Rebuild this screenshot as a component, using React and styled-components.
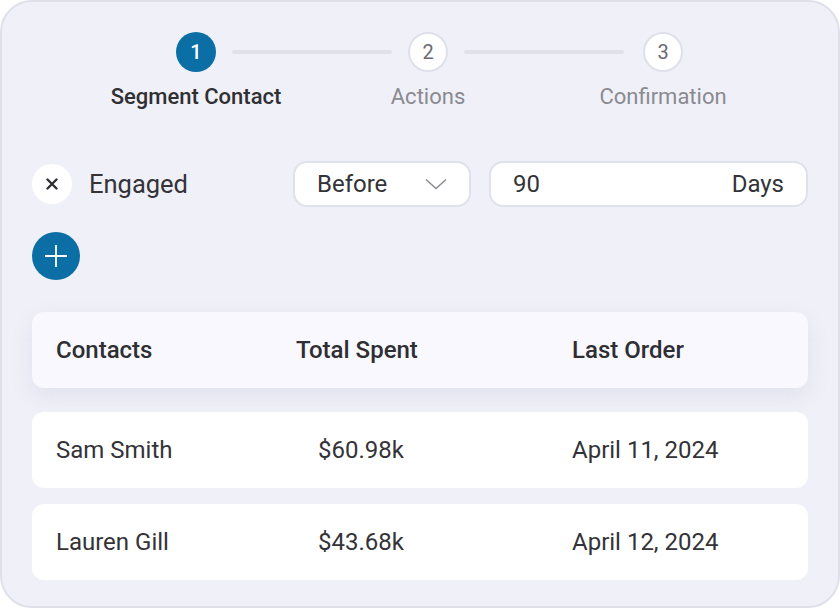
import React from 'react';
import styled, { createGlobalStyle } from 'styled-components';

const Global = createGlobalStyle`
  html, body {
    margin: 0;
    padding: 0;
    background: #ffffff;
  }
  body {
    font-family: Roboto, "Liberation Sans", sans-serif;
    color: #333338;
  }
`;

const Card = styled.div`
  box-sizing: border-box;
  width: 840px;
  height: 608px;
  background: #f0f0f8;
  border: 2px solid #dfe0ea;
  border-radius: 32px;
  padding: 30px 30px 0;
  display: flex;
  flex-direction: column;
`;

const Stepper = styled.div`
  display: flex;
  align-items: flex-start;
  padding-left: 144px;
`;

const Step = styled.div`
  width: 40px;
  display: flex;
  flex-direction: column;
  align-items: center;
`;

const Dot = styled.div`
  box-sizing: border-box;
  width: 40px;
  height: 40px;
  border-radius: 50%;
  display: flex;
  align-items: center;
  justify-content: center;
  font-size: 20px;
  font-weight: ${p => (p.active ? 500 : 400)};
  background: ${p => (p.active ? '#0b6fa6' : '#ffffff')};
  color: ${p => (p.active ? '#ffffff' : '#6a6a70')};
  border: ${p => (p.active ? 'none' : '2px solid #dfe0ea')};
`;

const StepLabel = styled.div`
  margin-top: 12px;
  white-space: nowrap;
  font-size: 22px;
  line-height: 26px;
  font-weight: ${p => (p.active ? 500 : 400)};
  color: ${p => (p.active ? '#303034' : '#8a8a90')};
`;

const Connector = styled.div`
  width: ${p => p.w}px;
  height: 4px;
  border-radius: 2px;
  background: #dfe0ea;
  margin: 18px 16px 0 16px;
  margin-right: ${p => p.mr || 16}px;
`;

const FilterRow = styled.div`
  display: flex;
  align-items: center;
  margin-top: 51px;
`;

const RoundButton = styled.button`
  box-sizing: border-box;
  flex: none;
  width: 40px;
  height: 40px;
  border-radius: 50%;
  border: none;
  padding: 0;
  background: #ffffff;
  display: flex;
  align-items: center;
  justify-content: center;
  margin-right: 17px;
`;

const FilterName = styled.div`
  flex: 1;
  font-size: 25.5px;
  color: #333338;
`;

const Field = styled.div`
  box-sizing: border-box;
  width: ${p => p.w}px;
  height: 46px;
  margin-right: ${p => p.mr || 0}px;
  background: #ffffff;
  border: 2px solid #e0e1eb;
  border-radius: 14px;
  display: flex;
  align-items: center;
  justify-content: space-between;
  padding: 0 22px;
  font-size: 24px;
  color: #333338;
`;

const AddButton = styled.button`
  width: 48px;
  height: 48px;
  border-radius: 50%;
  border: none;
  padding: 0;
  margin-top: 25px;
  background: #0b6fa6;
  display: flex;
  align-items: center;
  justify-content: center;
`;

const Table = styled.div`
  margin-top: 32px;
  display: flex;
  flex-direction: column;
`;

const Row = styled.div`
  height: 76px;
  display: grid;
  grid-template-columns: 240px 276px 1fr;
  align-items: center;
  padding: 0 24px;
  border-radius: 12px;
  margin-top: ${p => p.gap || 0}px;
  background: ${p => (p.head ? '#f8f8fe' : '#ffffff')};
  box-shadow: ${p => (p.head ? '0 8px 22px rgba(120, 124, 170, 0.12)' : 'none')};
  font-size: 24px;
  font-weight: ${p => (p.head ? 500 : 400)};
  color: ${p => (p.head ? '#2e2e33' : '#333338')};
`;

const Cell = styled.div`
  white-space: nowrap;
  padding-left: ${p => p.indent || 0}px;
`;

const rows = [
  { name: 'Sam Smith', spent: '$60.98k', date: 'April 11, 2024' },
  { name: 'Lauren Gill', spent: '$43.68k', date: 'April 12, 2024' },
];

export default function App() {
  return (
    <>
      <Global />
      <Card>
        <Stepper>
          <Step>
            <Dot active>1</Dot>
            <StepLabel active>Segment Contact</StepLabel>
          </Step>
          <Connector w={160} />
          <Step>
            <Dot>2</Dot>
            <StepLabel>Actions</StepLabel>
          </Step>
          <Connector w={160} mr={19} />
          <Step>
            <Dot>3</Dot>
            <StepLabel>Confirmation</StepLabel>
          </Step>
        </Stepper>

        <FilterRow>
          <RoundButton aria-label="Remove">
            <svg width="12" height="12" viewBox="0 0 12 12">
              <path d="M1.5 1.5 L10.5 10.5 M10.5 1.5 L1.5 10.5" stroke="#2e2e33" strokeWidth="2.4" strokeLinecap="round" />
            </svg>
          </RoundButton>
          <FilterName>Engaged</FilterName>
          <Field w={178} mr={18}>
            <span>Before</span>
            <svg width="22" height="12" viewBox="0 0 22 12">
              <path d="M1 1.5 L11 10.5 L21 1.5" fill="none" stroke="#8a8a90" strokeWidth="1.4" />
            </svg>
          </Field>
          <Field w={319}>
            <span>90</span>
            <span>Days</span>
          </Field>
        </FilterRow>

        <AddButton aria-label="Add">
          <svg width="24" height="24" viewBox="0 0 24 24">
            <path d="M12 1 V23 M1 12 H23" stroke="#ffffff" strokeWidth="1.8" />
          </svg>
        </AddButton>

        <Table>
          <Row head>
            <Cell>Contacts</Cell>
            <Cell>Total Spent</Cell>
            <Cell>Last Order</Cell>
          </Row>
          {rows.map((r, i) => (
            <Row key={r.name} gap={i === 0 ? 24 : 16}>
              <Cell>{r.name}</Cell>
              <Cell indent={22}>{r.spent}</Cell>
              <Cell>{r.date}</Cell>
            </Row>
          ))}
        </Table>
      </Card>
    </>
  );
}
